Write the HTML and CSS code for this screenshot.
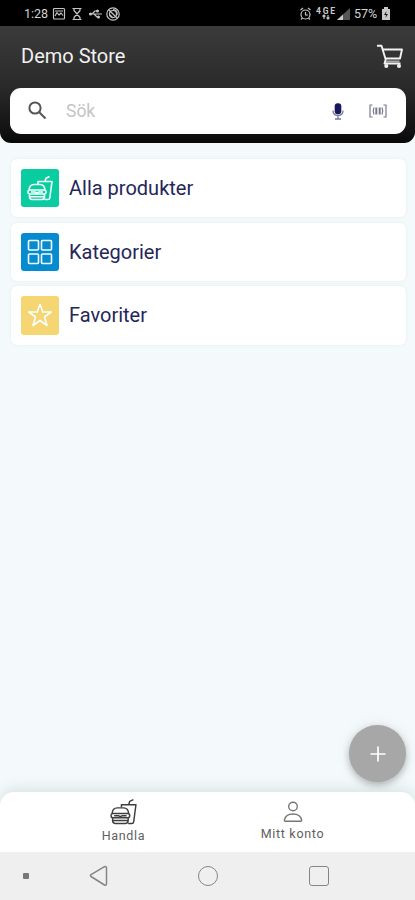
FILE: index.html
```html
<!DOCTYPE html>
<html lang="sv">
<head>
<meta charset="utf-8">
<title>Demo Store</title>
<link rel="stylesheet" href="styles.css">
</head>
<body>
<svg width="0" height="0" class="defs">
  <symbol id="meal" viewBox="0 0 26 26">
    <path d="M11 9V6.500H25L22.800 23Q22.600 24.500 21 24.500H17.500M18 6.500L19 3.200L22.500 1.500"/>
    <path d="M2 15Q2.500 9.500 7 9.500H13Q17.500 9.500 18 15ZM3 15Q1 15 1 17Q1 19 3 19H17Q19 19 19 17Q19 15 17 15M4 17H8L10 18L12 17H16M2.500 19V21.500Q2.500 24.500 5 24.500H15Q17.500 24.500 17.500 21.500V19M3 21.700H17"/>
  </symbol>
</svg>
<div class="screen">
  <div class="status">
    <span class="time">1:28</span>
    <svg class="status-left" viewBox="0 0 70 16" width="70" height="16">
      <rect x="1.500" y="2.500" width="11" height="10.500" rx="1"/>
      <path d="M3 10L5 6.500L7 9L9 7L11 9.500M3 5H11"/>
      <path d="M20.500 2.500H29.500M20.500 13.500H29.500M22 3V4.500L28 11.500V13M28 3V4.500L22 11.500V13"/>
      <path d="M37 8H50M40 8L43 5H45M42 8L45 11H47"/>
      <circle cx="38.500" cy="8" r="1.500" class="solid"/><circle cx="45.500" cy="5" r="1.500" class="solid"/><circle cx="46.500" cy="11" r="1.500" class="solid"/>
      <circle cx="61" cy="8" r="6.200"/><circle cx="61" cy="8" r="3.500"/>
      <path d="M57 4L65 12M61 3.500Q66 4 65 9M58 9L61 12"/>
    </svg>
    <svg class="status-right" viewBox="0 0 52 16" width="52" height="16">
      <circle cx="6.500" cy="8.500" r="4.500"/>
      <path d="M6.500 6V9H9M1.500 4L4 2M11.500 4L9 2M3.500 12L2 13.500M9.500 12L11 13.500"/>
      <path d="M25 9V13M29 9V13M23.500 10.500L25 9L26.500 10.500M27.500 11.500L29 13L30.500 11.500"/>
      <text x="17" y="8" textLength="19">4GE</text>
      <path class="dim" d="M38 14L51 2V14Z"/><path class="solid" d="M38 14L44 8.500V14Z"/>
    </svg>
    <span class="percent">57%</span>
    <svg class="battery" viewBox="0 0 10 14" width="10" height="14"><path class="solid" d="M3 0H7V2H9V13H1V2H3Z"/><path class="cut" d="M5.500 4L3 8H5L4.500 11L7 7H5Z"/></svg>
  </div>
  <header class="header">
    <div class="title-row">
      <h1>Demo Store</h1>
      <svg class="cart" viewBox="0 0 28 25" width="28" height="25">
        <path d="M1 1.700H5.500L9.700 15.500L8.500 19.500H24.500M7 5.500H26L24 14.500H9.500"/>
        <path class="base" d="M10 17.500H23.500"/>
        <circle cx="10.300" cy="22" r="1.100"/><circle cx="23" cy="22" r="1.100"/>
      </svg>
    </div>
    <div class="search">
      <svg class="lens" viewBox="0 0 19 19" width="19" height="19"><circle cx="7" cy="7" r="5.600"/><path d="M11 11L17.500 17.500"/></svg>
      <span class="placeholder">Sök</span>
      <svg class="mic" viewBox="0 0 12 17" width="12" height="17"><rect x="2.700" y="0.300" width="6.600" height="11" rx="3"/><path d="M1 7.500Q1 12.500 6 12.500Q11 12.500 11 7.500M6 12.500V16M3 16H9"/></svg>
      <svg class="scan" viewBox="0 0 18 14" width="18" height="14"><path d="M3.500 1H1V13H3.500M14.500 1H17V13H14.500M5 3.500Q3.500 7 5 10.500M13 3.500Q14.500 7 13 10.500"/><path class="bars" d="M7.300 3.500V10.500M10.700 3.500V10.500"/></svg>
    </div>
  </header>
  <main class="list">
    <div class="item">
      <span class="tile green"><svg width="26" height="26"><use href="#meal"/></svg></span>
      <span>Alla produkter</span>
    </div>
    <div class="item">
      <span class="tile blue"><svg viewBox="0 0 26 26" width="26" height="26"><rect x="1.500" y="1.500" width="10" height="9.500" rx="1"/><rect x="14.500" y="1.500" width="10" height="9.500" rx="1"/><rect x="1.500" y="15" width="10" height="9.500" rx="1"/><rect x="14.500" y="15" width="10" height="9.500" rx="1"/></svg></span>
      <span>Kategorier</span>
    </div>
    <div class="item">
      <span class="tile yellow"><svg viewBox="0 0 26 26" width="26" height="26"><path d="M13 2.200L15.800 10H24.200L17.500 15L20 23.500L13 18.500L6 23.500L8.500 15L1.800 10H10.200Z"/></svg></span>
      <span>Favoriter</span>
    </div>
  </main>
  <nav class="tabs">
    <div class="tab active">
      <svg width="27" height="27"><use href="#meal"/></svg>
      <span>Handla</span>
    </div>
    <div class="tab account">
      <svg viewBox="0 0 20 22" width="20" height="22"><circle cx="10" cy="5.500" r="4.300"/><path d="M2.300 20.300Q1.200 20.300 1.400 19Q2.600 13 10 13Q17.400 13 18.600 19Q18.800 20.300 17.700 20.300Z"/></svg>
      <span>Mitt konto</span>
    </div>
  </nav>
  <div class="system">
    <i class="dot"></i>
    <svg class="back" viewBox="0 0 20 22" width="20" height="22"><path d="M15.500 1.700L2 9.700Q0.800 10.600 2 11.500L15.500 20Q17.300 20.600 17.500 19V2.800Q17.300 1 15.500 1.700Z"/></svg>
    <i class="home"></i>
    <i class="recent"></i>
  </div>
  <button class="fab" aria-label="Lägg till"><svg viewBox="0 0 16 16" width="16" height="16"><path d="M8 .5V15.500M.5 8H15.500"/></svg></button>
</div>
</body>
</html>
```
FILE: styles.css
```css
* { box-sizing: border-box; }
body { margin: 0; font-family: Roboto, "Liberation Sans", sans-serif; }
svg { display: block; flex: none; fill: none; stroke-linejoin: round; }
.defs { position: absolute; }

.screen {
  position: relative;
  display: flex;
  flex-direction: column;
  width: 415px;
  height: 900px;
  overflow: hidden;
  background: #f4fafb;
}

.status {
  display: flex;
  align-items: center;
  flex: none;
  height: 26px;
  padding: 1px 24px 0 24px;
  background: #000;
  color: #d2d2d2;
  font-size: 12.5px;
}
.status svg { stroke: #c4c4c4; stroke-width: 1.2; }
.time { width: 28px; }
.status-right { margin-left: auto; }
.status-right text { fill: #ccc; stroke: none; font-size: 8.500px; font-weight: 700; }
.status .solid { fill: #c8c8c8; stroke: none; }
.status .dim { fill: #555; stroke: none; }
.status .cut { fill: #222; stroke: none; }
.percent { width: 26px; margin: 0 1px 0 3px; }

.header {
  flex: none;
  height: 117px;
  padding: 0 9px 0 10px;
  border-radius: 0 0 11px 11px;
  background: linear-gradient(#3b3b3c, #2a2a2a 52%, #131313 88%, #080808);
}
.title-row {
  display: flex;
  align-items: center;
  justify-content: space-between;
  height: 62px;
  padding: 0 1px 2px 11px;
}
h1 { margin: 0; color: #f0f0f0; font-size: 20px; font-weight: 400; }
.cart { margin-right: 1px; stroke: #f2f2f2; stroke-width: 1.900; }
.cart .base { stroke: #aaa; stroke-width: 2; }

.search {
  display: flex;
  align-items: center;
  height: 46px;
  padding: 0 19px 0 18px;
  border-radius: 11px;
  background: #fff;
}
.lens { margin-top: -2px; stroke: #555; stroke-width: 2; }
.placeholder { flex: 1; margin-left: 19px; color: #c4c4c4; font-size: 17.500px; }
.mic { fill: #17195a; stroke: none; }
.mic path { fill: none; stroke: #77799c; stroke-width: 1.300; }
.scan { margin-left: 25px; stroke: #77798f; stroke-width: 1.200; }
.bars { stroke: #77798f; stroke-width: 2; }

.list {
  display: flex;
  flex: 1;
  flex-direction: column;
  gap: 5.500px;
  padding: 16px 9px 0 11px;
}
.item {
  display: flex;
  align-items: center;
  gap: 10px;
  height: 58.200px;
  padding: 0 10px;
  border-radius: 6px;
  background: #fff;
  box-shadow: 0 0 3px rgba(90, 120, 120, .12);
  color: #25265a;
  font-size: 20px;
}
.tile {
  display: grid;
  place-items: center;
  width: 38px;
  height: 38.500px;
  border-radius: 3px;
}
.tile svg { stroke: #f4fffd; stroke-width: 1.600; }
.green { background: #09cda0; }
.blue { background: #068bd0; }
.yellow { background: #f6d573; }

.tabs {
  display: flex;
  flex: none;
  height: 60px;
  padding: 0 38px 0 39px;
  border-radius: 14px 14px 0 0;
  background: #fff;
  box-shadow: 0 -3px 14px rgba(60, 90, 90, .15);
}
.tab {
  display: flex;
  flex: 1;
  flex-direction: column;
  align-items: center;
  padding-top: 6px;
  color: #606060;
  font-size: 12.500px;
  line-height: 15px;
  letter-spacing: .7px;
}
.tab svg { stroke: #3e3e3e; stroke-width: 1.400; }
.active span { margin-top: 3px; }
.account { padding-top: 9px; }
.account svg { stroke: #777; }
.account span { margin-top: 3px; }

.system {
  display: flex;
  align-items: center;
  flex: none;
  height: 48px;
  padding-left: 23px;
  background: #efefef;
}
.dot { width: 6px; height: 6px; border-radius: 1px; background: #777; }
.back { margin-left: 60px; stroke: #858585; stroke-width: 1.500; }
.home { width: 20px; height: 20px; margin-left: 89px; border: 1.500px solid #858585; border-radius: 50%; }
.recent { width: 20px; height: 20px; margin-left: 91px; border: 1.500px solid #858585; border-radius: 3px; }

.fab {
  position: absolute;
  left: 349px;
  top: 725px;
  display: grid;
  place-items: center;
  width: 57px;
  height: 57px;
  padding: 0;
  border: 0;
  border-radius: 50%;
  background: #a7a7a7;
  box-shadow: 0 3px 7px rgba(0, 0, 0, .25), 0 0 16px rgba(0, 0, 0, .07);
}
.fab svg { stroke: #fff; stroke-width: 1.700; }
```
